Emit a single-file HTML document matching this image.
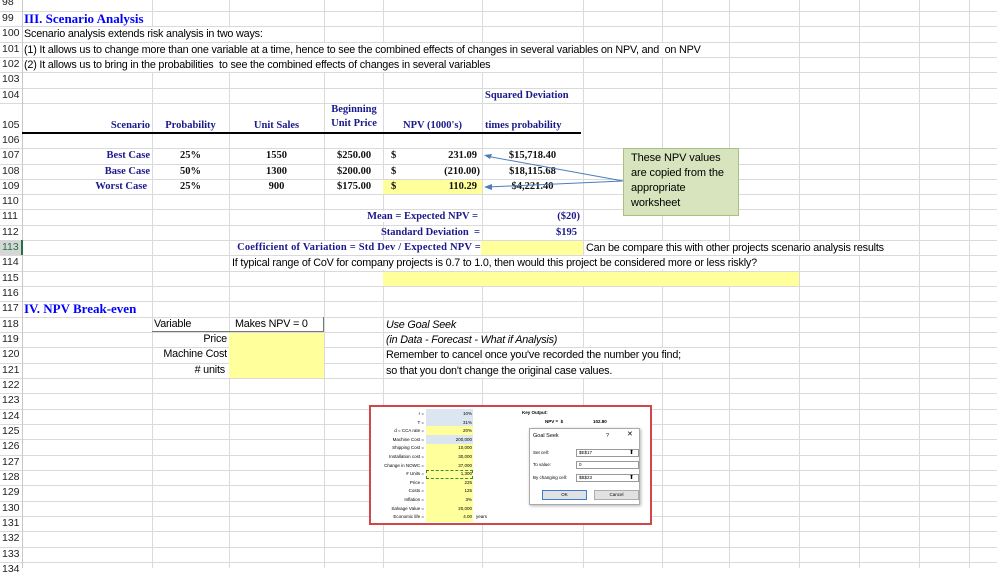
<!DOCTYPE html>
<html><head><meta charset="utf-8"><style>
*{margin:0;padding:0;box-sizing:border-box}
body{width:997px;height:568px;overflow:hidden;background:#fff;position:relative;font-family:"Liberation Sans",sans-serif;font-size:10.8px;letter-spacing:-0.2px;color:#000}
.hl{position:absolute;left:0;width:997px;height:1px;background:#dadada}
.vl{position:absolute;top:0;width:1px;height:568px;background:#dadada}
.t{position:absolute;height:15px;line-height:15px;white-space:nowrap}
.w{background:#fff;height:14px;margin-top:1px;line-height:14px;padding-right:2px}
.s{font-family:"Liberation Serif",serif;font-weight:bold;color:#1a1a8c;letter-spacing:0;font-size:10.5px}
.r{text-align:right}.ce{text-align:center}
.y{position:absolute;background:#ffff9c}
.rn{position:absolute;left:2px;height:15px;line-height:15px;font-size:10.5px;color:#222;letter-spacing:0}
.m{position:absolute;white-space:nowrap;font-size:4.5px;line-height:8px;letter-spacing:0}
</style></head><body>

<div class="hl" style="top:11px"></div><div class="hl" style="top:26px"></div><div class="hl" style="top:42px"></div><div class="hl" style="top:57px"></div><div class="hl" style="top:72px"></div><div class="hl" style="top:88px"></div><div class="hl" style="top:103px"></div>
<div class="hl" style="top:148px"></div><div class="hl" style="top:164px"></div><div class="hl" style="top:179px"></div><div class="hl" style="top:194px"></div><div class="hl" style="top:209px"></div><div class="hl" style="top:225px"></div><div class="hl" style="top:240px"></div><div class="hl" style="top:255px"></div><div class="hl" style="top:271px"></div><div class="hl" style="top:286px"></div><div class="hl" style="top:301px"></div><div class="hl" style="top:317px"></div><div class="hl" style="top:332px"></div><div class="hl" style="top:347px"></div><div class="hl" style="top:363px"></div><div class="hl" style="top:378px"></div><div class="hl" style="top:393px"></div><div class="hl" style="top:409px"></div><div class="hl" style="top:424px"></div><div class="hl" style="top:439px"></div><div class="hl" style="top:455px"></div><div class="hl" style="top:470px"></div><div class="hl" style="top:485px"></div><div class="hl" style="top:501px"></div><div class="hl" style="top:516px"></div><div class="hl" style="top:531px"></div><div class="hl" style="top:547px"></div><div class="hl" style="top:562px"></div>

<div class="vl" style="left:22px;background:#c8c8c8"></div><div class="vl" style="left:152px"></div><div class="vl" style="left:229px"></div><div class="vl" style="left:324px"></div><div class="vl" style="left:383px"></div><div class="vl" style="left:482px"></div><div class="vl" style="left:583px"></div><div class="vl" style="left:662px"></div><div class="vl" style="left:729px"></div><div class="vl" style="left:799px"></div><div class="vl" style="left:859px"></div><div class="vl" style="left:919px"></div><div class="vl" style="left:969px"></div>

<div class="y" style="left:383px;top:180px;width:99px;height:14px"></div>
<div class="y" style="left:383px;top:241px;width:200px;height:14px"></div>
<div class="y" style="left:383px;top:272px;width:416px;height:14px"></div>
<div class="y" style="left:229px;top:333px;width:95px;height:45px"></div>

<div style="position:absolute;left:22px;top:132px;width:559px;height:2px;background:#000"></div>
<div style="position:absolute;left:152px;top:331px;width:172px;height:1px;background:#777"></div>
<div style="position:absolute;left:323px;top:317px;width:1px;height:15px;background:#777"></div>
<div style="position:absolute;left:0;top:240px;width:22px;height:15px;background:#d6d6d6"></div>
<div style="position:absolute;left:21px;top:240px;width:2px;height:15px;background:#217346"></div>

<div class="rn" style="top:-5px">98</div><div class="rn" style="top:11px">99</div><div class="rn" style="top:26px">100</div><div class="rn" style="top:42px">101</div><div class="rn" style="top:57px">102</div><div class="rn" style="top:72px">103</div><div class="rn" style="top:88px">104</div><div class="rn" style="top:118px">105</div>
<div class="rn" style="top:133px">106</div><div class="rn" style="top:148px">107</div><div class="rn" style="top:164px">108</div><div class="rn" style="top:179px">109</div><div class="rn" style="top:194px">110</div><div class="rn" style="top:209px">111</div><div class="rn" style="top:225px">112</div><div class="rn" style="top:240px;color:#217346">113</div><div class="rn" style="top:255px">114</div><div class="rn" style="top:271px">115</div><div class="rn" style="top:286px">116</div><div class="rn" style="top:301px">117</div><div class="rn" style="top:317px">118</div><div class="rn" style="top:332px">119</div><div class="rn" style="top:347px">120</div><div class="rn" style="top:363px">121</div><div class="rn" style="top:378px">122</div><div class="rn" style="top:393px">123</div><div class="rn" style="top:409px">124</div><div class="rn" style="top:424px">125</div><div class="rn" style="top:439px">126</div><div class="rn" style="top:455px">127</div><div class="rn" style="top:470px">128</div><div class="rn" style="top:485px">129</div><div class="rn" style="top:501px">130</div><div class="rn" style="top:516px">131</div><div class="rn" style="top:531px">132</div><div class="rn" style="top:547px">133</div><div class="rn" style="top:562px">134</div>

<div class="t s w" style="left:23px;padding-left:1px;top:11px;font-size:13px;color:#0000ff">III. Scenario Analysis</div>
<div class="t w" style="left:23px;padding-left:1px;top:26px">Scenario analysis extends risk analysis in two ways:</div>
<div class="t w" style="left:23px;padding-left:1px;top:42px">(1) It allows us to change more than one variable at a time, hence to see the combined effects of changes in several variables on NPV, and&nbsp; on NPV</div>
<div class="t w" style="left:23px;padding-left:1px;top:57px">(2) It allows us to bring in the probabilities&nbsp; to see the combined effects of changes in several variables</div>

<div class="t s" style="left:485px;top:88px">Squared Deviation</div>
<div class="t s ce" style="left:324px;top:102px;width:60px">Beginning</div>
<div class="t s ce" style="left:324px;top:116px;width:60px">Unit Price</div>
<div class="t s r" style="left:22px;top:118px;width:128px">Scenario</div>
<div class="t s ce" style="left:152px;top:118px;width:77px">Probability</div>
<div class="t s ce" style="left:229px;top:118px;width:95px">Unit Sales</div>
<div class="t s ce" style="left:383px;top:118px;width:99px">NPV (1000's)</div>
<div class="t s" style="left:485px;top:118px">times probability</div>

<div class="t s r" style="left:22px;top:148px;width:128px">Best Case</div>
<div class="t s r" style="left:22px;top:164px;width:128px">Base Case</div>
<div class="t s r" style="left:22px;top:179px;width:125px">Worst Case</div>
<div class="t s ce" style="left:152px;top:148px;width:77px;color:#111">25%</div>
<div class="t s ce" style="left:152px;top:164px;width:77px;color:#111">50%</div>
<div class="t s ce" style="left:152px;top:179px;width:77px;color:#111">25%</div>
<div class="t s ce" style="left:229px;top:148px;width:95px;color:#111">1550</div>
<div class="t s ce" style="left:229px;top:164px;width:95px;color:#111">1300</div>
<div class="t s ce" style="left:229px;top:179px;width:95px;color:#111">900</div>
<div class="t s ce" style="left:324px;top:148px;width:60px;color:#111">$250.00</div>
<div class="t s ce" style="left:324px;top:164px;width:60px;color:#111">$200.00</div>
<div class="t s ce" style="left:324px;top:179px;width:60px;color:#111">$175.00</div>
<div class="t s" style="left:391px;top:148px;color:#111">$</div>
<div class="t s" style="left:391px;top:164px;color:#111">$</div>
<div class="t s" style="left:391px;top:179px;color:#111">$</div>
<div class="t s r" style="left:383px;top:148px;width:94px;color:#111">231.09</div>
<div class="t s r" style="left:383px;top:164px;width:97px;color:#111">(210.00)</div>
<div class="t s r" style="left:383px;top:179px;width:94px;color:#111">110.29</div>
<div class="t s ce" style="left:482px;top:148px;width:101px;color:#111">$15,718.40</div>
<div class="t s ce" style="left:482px;top:164px;width:101px;color:#111">$18,115.68</div>
<div class="t s ce" style="left:482px;top:179px;width:101px;color:#111">$4,221.40</div>

<div class="t s r" style="left:200px;top:209px;width:278px"><span style="background:#fff">Mean = Expected NPV =</span></div>
<div class="t s r" style="left:200px;top:225px;width:280px">Standard Deviation &nbsp;=</div>
<div class="t s r" style="left:200px;top:240px;width:281px"><span style="background:#fff;display:inline-block;height:14px;margin-top:1px;line-height:14px;letter-spacing:0.2px">Coefficient of Variation = Std Dev / Expected NPV =</span></div>
<div class="t s r" style="left:482px;top:209px;width:98px">($20)</div>
<div class="t s r" style="left:482px;top:225px;width:95px">$195</div>
<div class="t w" style="left:584px;padding-left:2px;top:240px">Can be compare this with other projects scenario analysis results</div>
<div class="t w" style="left:230px;padding-left:2px;top:255px">If typical range of CoV for company projects is 0.7 to 1.0, then would this project be considered more or less riskly?</div>

<div class="t s w" style="left:23px;padding-left:1px;top:301px;font-size:13px;color:#0000ff">IV. NPV Break-even</div>
<div class="t" style="left:154px;top:317px">Variable</div>
<div class="t" style="left:235px;top:317px">Makes NPV = 0</div>
<div class="t r" style="left:152px;top:332px;width:75px">Price</div>
<div class="t r" style="left:152px;top:347px;width:75px">Machine Cost</div>
<div class="t r" style="left:152px;top:363px;width:73px"># units</div>
<div class="t w" style="left:384px;padding-left:2px;top:317px;font-style:italic">Use Goal Seek</div>
<div class="t w" style="left:384px;padding-left:2px;top:332px;font-style:italic">(in Data - Forecast - What if Analysis)</div>
<div class="t w" style="left:384px;padding-left:2px;top:347px">Remember to cancel once you've recorded the number you find;</div>
<div class="t w" style="left:384px;padding-left:2px;top:363px">so that you don't change the original case values.</div>

<div style="position:absolute;left:623px;top:148px;width:116px;height:68px;background:#d7e4bd;border:1px solid #a8c080;padding:2px 0 0 7px;font-size:11px;line-height:15px;letter-spacing:-0.1px;white-space:nowrap">These NPV values<br>are copied from the<br>appropriate<br>worksheet</div>
<svg style="position:absolute;left:0;top:0" width="997" height="568">
<line x1="623" y1="181" x2="486" y2="156" stroke="#4a7ebb" stroke-width="1"/>
<polygon points="484,155 492,154 490,159" fill="#4a7ebb"/>
<line x1="623" y1="181" x2="487" y2="187" stroke="#4a7ebb" stroke-width="1"/>
<polygon points="484,187 492,184 492,190" fill="#4a7ebb"/>
</svg>

<div style="position:absolute;left:369px;top:405px;width:283px;height:120px;background:#fff;border:2px solid #d0474a"></div>
<div style="position:absolute;left:426px;top:409px;width:47px;height:26px;background:#dce6f1"></div>
<div style="position:absolute;left:426px;top:426px;width:47px;height:9px;background:#ffff9c"></div>
<div style="position:absolute;left:426px;top:435px;width:47px;height:9px;background:#dce6f1"></div>
<div style="position:absolute;left:426px;top:444px;width:47px;height:78px;background:#ffff9c"></div>
<div style="position:absolute;left:426px;top:470px;width:47px;height:9px;border:1px dashed #3a8a3a"></div>
<div class="m r" style="left:370px;top:410px;width:54px;line-height:8.6px">r =<br>T =<br>d = CCA rate =<br>Machine Cost =<br>Shipping Cost =<br>Installation cost =<br>Change in NOWC =<br># Units =<br>Price =<br>Costs =<br>Inflation =<br>Salvage Value =<br>Economic life =</div>
<div class="m r" style="left:426px;top:410px;width:46px;line-height:8.6px">10%<br>31%<br>20%<br>200,000<br>10,000<br>30,000<br>37,000<br>1,300<br>225<br>125<br>3%<br>20,000<br>4.00</div>
<div class="m" style="left:476px;top:513px">years</div>
<div class="m" style="left:522px;top:409px;font-weight:bold">Key Output:</div>
<div class="m" style="left:545px;top:418px;font-weight:bold">NPV = &nbsp;$</div>
<div class="m" style="left:593px;top:418px;font-weight:bold">102.80</div>
<div style="position:absolute;left:529px;top:428px;width:111px;height:77px;background:#fff;border:1px solid #aaa;box-shadow:1px 1px 3px rgba(0,0,0,.3)"></div>
<div class="m" style="left:533px;top:432px;font-size:5.5px">Goal Seek</div>
<div class="m" style="left:606px;top:432px;font-size:5.5px">?</div>
<div class="m" style="left:627px;top:431px;font-size:7px">✕</div>
<div class="m" style="left:533px;top:449px">Set cell:</div>
<div class="m" style="left:533px;top:461px">To value:</div>
<div class="m" style="left:533px;top:474px">By changing cell:</div>
<div style="position:absolute;left:576px;top:449px;width:63px;height:8px;border:1px solid #999"></div>
<div style="position:absolute;left:576px;top:461px;width:63px;height:8px;border:1px solid #999"></div>
<div style="position:absolute;left:576px;top:474px;width:63px;height:8px;border:1px solid #999"></div>
<div class="m" style="left:579px;top:449px">$E$17</div>
<div class="m" style="left:579px;top:461px">0</div>
<div class="m" style="left:579px;top:474px">$B$23</div>
<div class="m" style="left:629px;top:449px;font-size:6px">⬆</div>
<div class="m" style="left:629px;top:474px;font-size:6px">⬆</div>
<div style="position:absolute;left:542px;top:490px;width:45px;height:10px;background:#e1e1e1;border:1px solid #3c7fd1"></div>
<div style="position:absolute;left:594px;top:490px;width:45px;height:10px;background:#e1e1e1;border:1px solid #adadad"></div>
<div class="m ce" style="left:542px;top:491px;width:45px">OK</div>
<div class="m ce" style="left:594px;top:491px;width:45px">Cancel</div>
</body></html>
